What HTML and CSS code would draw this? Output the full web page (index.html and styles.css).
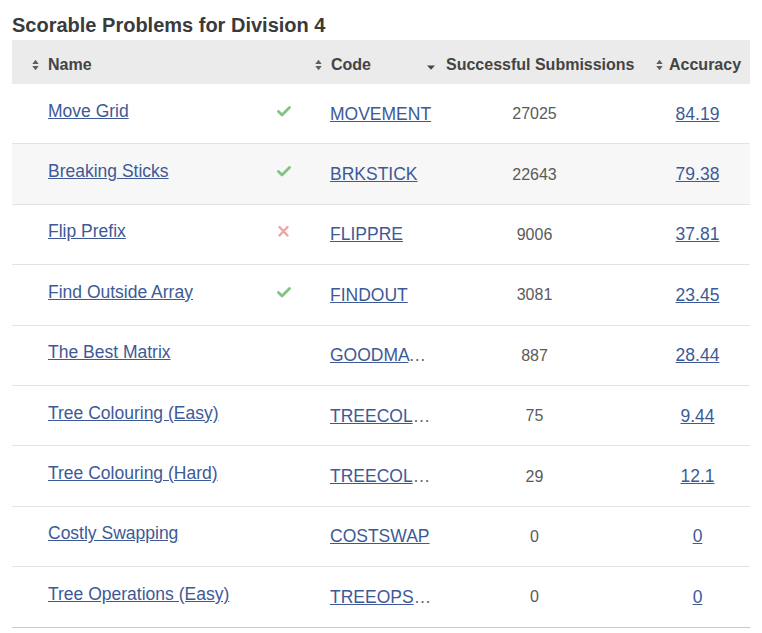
FILE: index.html
```html
<!DOCTYPE html>
<html>
<head>
<meta charset="utf-8">
<link rel="stylesheet" href="styles.css">
</head>
<body>
<div class="wrap">
  <h2 class="title">Scorable Problems for Division 4</h2>
  <div class="table">
    <div class="row head">
      <div class="cell c-name"><svg class="sort" width="7" height="12" viewBox="0 0 7 12"><path d="M0.3 5L3.5 0.8L6.7 5Z M0.3 7L3.5 11.2L6.7 7Z" fill="#5e5e5e"/></svg><span>Name</span></div>
      <div class="cell c-code"><svg class="sort" width="7" height="12" viewBox="0 0 7 12"><path d="M0.3 5L3.5 0.8L6.7 5Z M0.3 7L3.5 11.2L6.7 7Z" fill="#5e5e5e"/></svg><span>Code</span></div>
      <div class="cell c-subs"><svg class="down" width="8" height="5" viewBox="0 0 8 5"><path d="M0 0.5L8 0.5L4 4.8Z" fill="#444"/></svg><span>Successful Submissions</span></div>
      <div class="cell c-acc"><svg class="sort" width="7" height="12" viewBox="0 0 7 12"><path d="M0.3 5L3.5 0.8L6.7 5Z M0.3 7L3.5 11.2L6.7 7Z" fill="#5e5e5e"/></svg><span>Accuracy</span></div>
    </div>

    <div class="row">
      <div class="cell c-name"><a href="#">Move Grid</a><svg class="ok" width="14" height="11" viewBox="0 0 14 11"><path d="M1.5 5.5L5 9L12.5 1.5" fill="none" stroke="#80c483" stroke-width="2.8" stroke-linecap="round" stroke-linejoin="round"/></svg></div>
      <div class="cell c-code"><span class="code"><a href="#">MOVEMENT</a></span></div>
      <div class="cell c-subs num">27025</div>
      <div class="cell c-acc num"><a href="#">84.19</a></div>
    </div>
    <div class="row alt">
      <div class="cell c-name"><a href="#">Breaking Sticks</a><svg class="ok" width="14" height="11" viewBox="0 0 14 11"><path d="M1.5 5.5L5 9L12.5 1.5" fill="none" stroke="#80c483" stroke-width="2.8" stroke-linecap="round" stroke-linejoin="round"/></svg></div>
      <div class="cell c-code"><span class="code"><a href="#">BRKSTICK</a></span></div>
      <div class="cell c-subs num">22643</div>
      <div class="cell c-acc num"><a href="#">79.38</a></div>
    </div>
    <div class="row">
      <div class="cell c-name"><a href="#">Flip Prefix</a><svg class="ok" width="14" height="11" viewBox="0 0 14 11"><path d="M2.5 1L10.5 9.5M10.5 1L2.5 9.5" fill="none" stroke="#f2a3a3" stroke-width="2.4" stroke-linecap="round"/></svg></div>
      <div class="cell c-code"><span class="code"><a href="#">FLIPPRE</a></span></div>
      <div class="cell c-subs num">9006</div>
      <div class="cell c-acc num"><a href="#">37.81</a></div>
    </div>
    <div class="row">
      <div class="cell c-name"><a href="#">Find Outside Array</a><svg class="ok" width="14" height="11" viewBox="0 0 14 11"><path d="M1.5 5.5L5 9L12.5 1.5" fill="none" stroke="#80c483" stroke-width="2.8" stroke-linecap="round" stroke-linejoin="round"/></svg></div>
      <div class="cell c-code"><span class="code"><a href="#">FINDOUT</a></span></div>
      <div class="cell c-subs num">3081</div>
      <div class="cell c-acc num"><a href="#">23.45</a></div>
    </div>
    <div class="row">
      <div class="cell c-name"><a href="#">The Best Matrix</a></div>
      <div class="cell c-code"><span class="code"><a href="#">GOODMATRIX</a></span></div>
      <div class="cell c-subs num">887</div>
      <div class="cell c-acc num"><a href="#">28.44</a></div>
    </div>
    <div class="row">
      <div class="cell c-name"><a href="#">Tree Colouring (Easy)</a></div>
      <div class="cell c-code"><span class="code"><a href="#">TREECOLEASY</a></span></div>
      <div class="cell c-subs num">75</div>
      <div class="cell c-acc num"><a href="#">9.44</a></div>
    </div>
    <div class="row">
      <div class="cell c-name"><a href="#">Tree Colouring (Hard)</a></div>
      <div class="cell c-code"><span class="code"><a href="#">TREECOLHARD</a></span></div>
      <div class="cell c-subs num">29</div>
      <div class="cell c-acc num"><a href="#">12.1</a></div>
    </div>
    <div class="row">
      <div class="cell c-name"><a href="#">Costly Swapping</a></div>
      <div class="cell c-code"><span class="code"><a href="#">COSTSWAP</a></span></div>
      <div class="cell c-subs num">0</div>
      <div class="cell c-acc num"><a href="#">0</a></div>
    </div>
    <div class="row last">
      <div class="cell c-name"><a href="#">Tree Operations (Easy)</a></div>
      <div class="cell c-code"><span class="code"><a href="#">TREEOPSEASY</a></span></div>
      <div class="cell c-subs num">0</div>
      <div class="cell c-acc num"><a href="#">0</a></div>
    </div>
  </div>
</div>
</body>
</html>
```

FILE: styles.css
```css
html, body {
  margin: 0;
  padding: 0;
  background: #fff;
}
body {
  font-family: "Liberation Sans", Arial, sans-serif;
  color: #555;
}
.wrap {
  padding: 0 12px;
}
.title {
  margin: 14px 0 3px 0;
  font-size: 20px;
  line-height: 23px;
  font-weight: bold;
  color: #3a3a3a;
}
.table {
  width: 738px;
}
.row {
  display: grid;
  grid-template-columns: 288px 124px 221px 105px;
  height: 60.4px;
  box-sizing: border-box;
  border-bottom: 1px solid #e3e3e3;
}
.row.alt {
  background: #f7f7f7;
}
.row.last {
  border-bottom: 1px solid #c9c9c9;
}
.row.head {
  height: 44px;
  background: #ebebeb;
  border-bottom: none;
  padding-top: 6px;
  font-size: 16px;
  font-weight: bold;
  color: #444;
}
.cell {
  display: flex;
  align-items: center;
  min-width: 0;
  white-space: nowrap;
}
a {
  color: #3d5a97;
  text-decoration: underline;
}
.c-name {
  padding-left: 36px;
  padding-right: 9px;
  padding-bottom: 5px;
  box-sizing: border-box;
  font-size: 17.5px;
}
.c-name .ok {
  margin-left: auto;
}
.c-code {
  padding-left: 30px;
  padding-top: 1px;
  font-size: 17.5px;
}
.code {
  display: block;
  width: 104px;
  flex: none;
  overflow: hidden;
  text-overflow: ellipsis;
  white-space: nowrap;
  color: #666;
}
.num {
  justify-content: center;
  padding-top: 1px;
  font-size: 16px;
  color: #5a5a5a;
}
.c-acc.num {
  font-size: 17.5px;
}
.head .cell {
  gap: 9px;
  padding-top: 0;
  padding-bottom: 0;
  font-size: 16px;
}
.head .c-name {
  padding-left: 20px;
}
.head .c-code {
  padding-left: 15px;
}
.head .c-subs {
  padding-left: 3px;
  gap: 11px;
}
.head .c-acc {
  padding-left: 11px;
  gap: 6px;
}
.down {
  margin-top: 5px;
}
```
